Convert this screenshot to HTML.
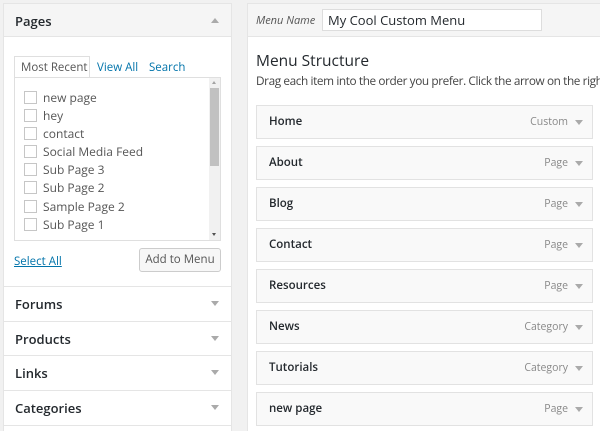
<!DOCTYPE html>
<html><head><style>
*{box-sizing:border-box;margin:0;padding:0}
html,body{width:600px;height:431px;overflow:hidden}
body{background:#f1f1f1;font-family:"Open Sans","Liberation Sans",sans-serif;color:#23282d;position:relative}
.a{position:absolute}
.lp{left:3px;top:3px;width:229px;height:428px;background:#fff;border:1px solid #e5e5e5;border-bottom:none}
.hdr{left:4px;top:4px;width:227px;height:33px;background:#f5f5f5;border-bottom:1px solid #e5e5e5}
.tri{width:0;height:0;border-left:4px solid transparent;border-right:4px solid transparent}
.dn{border-top:5px solid #aaa}
.up{border-bottom:5px solid #aaa}
.row{left:4px;width:227px;height:35px;border-top:1px solid #e5e5e5}
.row span{position:absolute;left:11px;top:8px;font-size:13px;font-weight:600}
.row i{position:absolute;left:207px;top:14px}
.cb{width:13px;height:13px;border:1px solid #c6c6c6;background:#fff;left:24px}
.li{left:43px;font-size:12px;color:#555}
.rp{left:247px;top:3px;width:353px;height:428px;background:#fff;border:1px solid #e5e5e5;border-right:none;border-bottom:none}
.rh{left:248px;top:4px;width:352px;height:33px;background:#f5f5f5;border-bottom:1px solid #e5e5e5}
.it{left:256px;width:337px;height:34px;background:#f9f9f9;border:1px solid #e2e2e2}
.it b{position:absolute;left:12px;top:8px;font-size:11.5px;font-weight:600}
.it em{position:absolute;right:24px;top:9px;font-size:10.5px;color:#888;font-style:normal}
.it i{position:absolute;right:9px;top:14px}
</style></head><body>
<div class="a lp"></div>
<div class="a hdr"><span class="a" style="left:11px;top:8px;font-size:13px;font-weight:600">Pages</span><i class="a tri up" style="left:207px;top:14px"></i></div>
<div class="a" style="left:14px;top:56px;width:76px;height:22px;border:1px solid #dfdfdf;border-bottom:none;background:#fff"></div>
<span class="a" style="left:21px;top:60px;font-size:11.5px;color:#555">Most Recent</span>
<span class="a" style="left:97px;top:60px;font-size:11.5px;color:#0073aa">View All</span>
<span class="a" style="left:149px;top:60px;font-size:11.5px;color:#0073aa">Search</span>
<div class="a" style="left:14px;top:77px;width:207px;height:164px;border:1px solid #dfdfdf;background:#fff;overflow:hidden">
<div class="a" style="left:194px;top:0;width:11px;height:162px;background:#f1f1f1"></div>
<div class="a" style="left:195px;top:10px;width:9px;height:78px;background:#c1c1c1"></div>
<div class="a" style="left:197px;top:3px;border-left:2px solid transparent;border-right:2px solid transparent;border-bottom:3px solid #a3a3a3"></div>
<div class="a" style="left:197px;top:155px;border-left:2px solid transparent;border-right:2px solid transparent;border-top:3px solid #505050"></div>
</div>
<div class="a cb" style="top:91px"></div><span class="a li" style="top:89px">new page</span>
<div class="a cb" style="top:109px"></div><span class="a li" style="top:107px">hey</span>
<div class="a cb" style="top:127px"></div><span class="a li" style="top:125px">contact</span>
<div class="a cb" style="top:145px"></div><span class="a li" style="top:143px">Social Media Feed</span>
<div class="a cb" style="top:163px"></div><span class="a li" style="top:161px">Sub Page 3</span>
<div class="a cb" style="top:181px"></div><span class="a li" style="top:179px">Sub Page 2</span>
<div class="a cb" style="top:200px"></div><span class="a li" style="top:198px">Sample Page 2</span>
<div class="a cb" style="top:218px"></div><span class="a li" style="top:216px">Sub Page 1</span>
<div class="a" style="left:15px;top:236px;width:193px;height:4px;background:#fff"></div>
<span class="a" style="left:14px;top:254px;font-size:11.5px;color:#0073aa;text-decoration:underline">Select All</span>
<div class="a" style="left:139px;top:248px;width:82px;height:24px;border:1px solid #ccc;border-radius:3px;background:#f7f7f7;font-size:11.5px;color:#555;text-align:center;line-height:22px">Add to Menu</div>
<div class="a row" style="top:286px"><span>Forums</span><i class="tri dn"></i></div>
<div class="a row" style="top:321px"><span>Products</span><i class="tri dn"></i></div>
<div class="a row" style="top:355px"><span>Links</span><i class="tri dn"></i></div>
<div class="a row" style="top:390px"><span>Categories</span><i class="tri dn"></i></div>
<div class="a" style="left:4px;top:425px;width:227px;border-top:1px solid #e5e5e5"></div>

<div class="a rp"></div>
<div class="a rh"></div>
<span class="a" style="left:256px;top:13px;font-size:11px;font-style:italic;color:#555">Menu Name</span>
<div class="a" style="left:322px;top:9px;width:220px;height:22px;border:1px solid #ddd;background:#fff;font-size:13px;padding-left:5px;line-height:20px">My Cool Custom Menu</div>
<span class="a" style="left:256px;top:49px;font-size:15.5px">Menu Structure</span>
<div class="a" style="left:256px;top:73px;width:344px;overflow:hidden;font-size:11.8px;letter-spacing:-0.4px;color:#444;white-space:nowrap">Drag each item into the order you prefer. Click the arrow on the right of the item</div>
<div class="a it" style="top:105px"><b>Home</b><em>Custom</em><i class="tri dn"></i></div>
<div class="a it" style="top:146px"><b>About</b><em>Page</em><i class="tri dn"></i></div>
<div class="a it" style="top:187px"><b>Blog</b><em>Page</em><i class="tri dn"></i></div>
<div class="a it" style="top:228px"><b>Contact</b><em>Page</em><i class="tri dn"></i></div>
<div class="a it" style="top:269px"><b>Resources</b><em>Page</em><i class="tri dn"></i></div>
<div class="a it" style="top:310px"><b>News</b><em>Category</em><i class="tri dn"></i></div>
<div class="a it" style="top:351px"><b>Tutorials</b><em>Category</em><i class="tri dn"></i></div>
<div class="a it" style="top:392px"><b>new page</b><em>Page</em><i class="tri dn"></i></div>
</body></html>
